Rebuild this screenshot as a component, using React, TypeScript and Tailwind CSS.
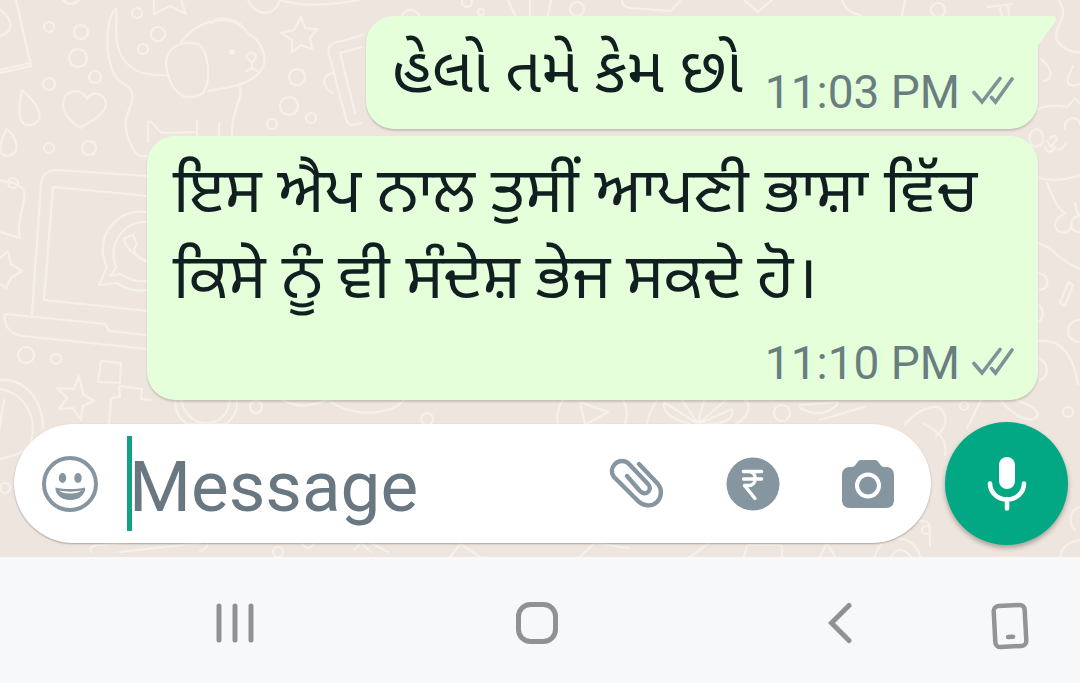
import { FC, ReactNode, useState } from "react";

interface MessageProps {
  text: string;
  time: string;
  lang: string;
  tail?: boolean;
  stacked?: boolean;
}

const Ticks = () => (
  <svg viewBox="0 0 42 32" className="h-8 w-[42px] shrink-0" fill="none" stroke="#7f9396" strokeWidth="3.6" strokeLinecap="round" aria-label="Delivered">
    <path d="M2 16.500 10 26 28 2.500M19.500 21.500 23.500 26 40 3" />
  </svg>
);

const Message: FC<MessageProps> = ({ text, time, lang, tail = false, stacked = false }) => (
  <div
    className={`relative flex rounded-[28px] bg-[#e5ffdb] pl-[26px] pr-6 shadow-[0_2px_2px_rgba(0,0,0,0.16)] ${
      stacked ? "w-[891px] max-w-full flex-col gap-4 pb-[10px] pt-3" : "gap-[22px] rounded-tr-none"
    }`}
  >
    <p lang={lang} className={`text-[63px] text-[#111f20] ${stacked ? "leading-[86px]" : "pb-[14px] pt-[10px] leading-[89px]"}`}>
      {text}
    </p>
    <div className={`flex items-center gap-3 self-end text-[46px] leading-[54px] text-[#6a7e80] ${stacked ? "" : "pb-[10px]"}`}>
      <span className="whitespace-nowrap">{time}</span>
      <Ticks />
    </div>
    {tail && (
      <svg viewBox="0 0 20 32" className="absolute left-full top-0 -ml-px h-8 w-5" fill="#e5ffdb" aria-hidden="true">
        <path d="M0 0h15c4 0 5 3 3 6L1 29v3H0Z" />
      </svg>
    )}
  </div>
);

const dots = [
  [49, 27, 5], [81, 32, 7], [78, 58, 9], [95, 77, 6], [49, 84, 6], [137, 13, 5], [158, 34, 7], [143, 49, 5],
  [297, 77, 8], [289, 106, 9], [311, 118, 5], [272, 124, 5], [49, 148, 5], [89, 148, 7], [13, 183, 5],
  [26, 355, 8], [56, 359, 5], [256, 407, 6], [427, 419, 6], [467, 2, 5], [481, 12, 3], [577, 9, 7],
  [938, 10, 7], [782, 413, 8], [964, 406, 4], [1068, 412, 5], [926, 530, 4], [278, 552, 5], [308, 542, 6], [5, 488, 5],
] as const;

const lines = [
  // books and droplets
  "M16 0 31 66 0 73M0 70 30 63M0 10c14 10 14 22 0 26",
  "M22 90c-8 36 4 37 12 34 13-7 1-23-12-34ZM7 129c-8 14-10 25 0 27 15-2 10-18 0-27Z",
  "M87 98c-9-12-23-7-24 6 1 14 10 18 17 24 9-6 25-13 26-24-1-11-14-14-19-5Z",
  // puppy
  "M116 9c-12 8-12 60 4 72 13 9 13 11 12 21-8 19-9 24-1 43 5 10 6 12 16 11M116 9c2 11-6 43 15 58 11 9 22 7 38 9",
  "M180 44c14-23 51-35 70-9 12 7 17 20 13 32-9 17-29 20-55 24M180 44c-16 7-16 19-11 34 7 20 20 23 34 15 10-16 4-42-4-49-9-1-13-2-19 0Z",
  "M211 23c10-10 30-2 34 7M247 55c5-5 11-1 8 4l-3 4-6-6m6 6v5l-6 3m6-3 5 3M240 87c3 14-8 19-8 48M148 121v21M148 121c9 2 7 10 15 12l34-1M197 121v15M219 123v12",
  "m301 17 4 11 12 1-7 9 2 11-11-4-9 7v-12l-11-7 13-3ZM154 0v14l16-8 16 8-5-14M63 0c5 6 12 4 16 0M248 0c9 18 27 16 32 0 25 8 60 4 80 0",
  "M363 35 334 43c-6 2-6 6-5 11l17 65c2 7 6 7 15 4M362 47l-22 6 15 60M332 73c-12 4-9 15 1 20",
  // laptop
  "M148 176 57 170q-14 0-16 14l-9 130M148 196 53 187 44 300l104 11M5 314c-2 13 7 21 18 22l125 13M5 314l100 10 4 7 39 4",
  "M148 212c-34-5-55 29-41 55l-8 18 18-2c10 7 19 9 31 7M148 222c-24-2-41 22-32 45l-6 9 10-2q14 9 28 7M148 261c-18-5-27-22-23-23l8-3 4 9-3 5c1 7 8 12 14 13",
  "M0 180c12 4 27 2 24 20-4 20-7 27-4 38L0 232M0 258l8-7 3 13 11 7-11 7-5 10-6-4",
  "m79 376-5 13-17-1 10 10-8 11 14-1 8 12 2-14 11-5-11-7ZM101 361l20 2-1 20-22-1ZM119 386l23 3-1 10 10 1M119 386l1 11-9 1-2 26M0 380c25-2 43 20 43 48M0 389c24 4 36 26 32 48-2 13-12 18-32 22M4 400l-5 32",
  "M175 400c0 13 6 20 12 24h40c8-9 12-18 9-24M181 400c6 31 46 31 49 0M283 400c18 11 40 2 45-1 19 18 62 18 76 1",
  // strip above the composer
  "M558 424c-2-9 0-17 5-24M625 424c3-9 2-17-2-24M580 402l5 23 23-13ZM647 424c1-9 6-18 10-24M698 424l-16-24M698 424l-34-22q-3 14 26 22M698 424l6-24M698 424l28-24M698 424l34-15q4 15-28 15M736 424c13-7 16-20 9-24",
  "M800 408q22 12 38-4M800 405l38-3M820 420l44-13M905 424c14-16 34-22 38-12 7 11-1 19-7 24M924 424c20 10 23 20 21 31M1000 400c16 19 34 24 38 15-1-8-15-12-21-15M981 400l-14 28",
  // right-hand side
  "M1059 0c12 20-7 25-2 40 5 9 16 13 23 12M1041 59c11 10 13 19 3 22M1073 66c-9 18-6 22 7 18M1035 111c7-6 23-6 32-4l8-9 5 6M1036 177c14 5 30 3 44-2M1047 183c6 15 10 25 18 30M1075 203q1 8 5 13",
  "M1030 142c-3-15 13-17 13-4 0 10-12 11-13 4ZM1065 129c-2-13 15-15 16-2M1050 138c6-5 9 1 4 5l-3 4-4-6M1045 147c2 7 9 5 9 0 3 4 9 3 12-4",
  "M1066 213c-12 5-14 15-6 19 10 3 10-4 12-8M1080 215c-13 3-11 18 0 17M1038 243c21 7 18 17 42 26M1068 282l5 3-8 21-5-3ZM1038 273c11 0 13 15 2 17M1038 305c7 4 6 14 0 17M1038 341c23-3 35 14 40 43M1040 359c9 4 9 19 0 21M1080 320c-16 0-16 22 0 22",
  // top edge
  "M508 0l7 15M530 0v15M551 0l-3 15M622 0c0 6 3 7 9 8l40 3 9-10M402 15q9-10 17 0M744 0l14 12 14-12M842 0q4 13 18 15M902 15l3-15M988 7l24-3M1000 8l2 8M1008 5l1 11",
  // bottom strip
  "M91 552c-2-6 2-7 12-7l55-6h42c10 1 9 9 0 12M120 552l80-9M354 550l7-7 10 9M371 543l17 9M450 557l10-13 20 13M580 557l14-14 35 5M690 557l19-14M744 557l3-12h35v12M820 557l7-14 8 14M875 557c4-25 40-25 45 0M891 557q9-14 20 0M930 546V528q0-7-8-7h-7M1060 557q3-15 20-17M1075 530c-7-7-6-20 5-23",
];

const Wallpaper = () => (
  <svg viewBox="0 0 1080 557" preserveAspectRatio="xMaxYMax slice" className="absolute inset-0 h-full w-full" fill="none" stroke="#f6f0ea" strokeWidth="2.2" strokeLinejoin="round" strokeLinecap="round" aria-hidden="true">
    {lines.map((d) => (
      <path key={d} d={d} />
    ))}
    {dots.map(([cx, cy, r]) => (
      <circle key={`${cx}-${cy}`} cx={cx} cy={cy} r={r} />
    ))}
    <circle cx="232" cy="52" r="2" fill="#f6f0ea" />
  </svg>
);

const SmileIcon = () => (
  <svg viewBox="0 0 56 56" className="size-14" fill="none" aria-hidden="true">
    <circle cx="28" cy="28" r="26" stroke="#8696a0" strokeWidth="4" />
    <ellipse cx="20.500" cy="22" rx="3.700" ry="5" fill="#8696a0" />
    <ellipse cx="36" cy="22" rx="3.700" ry="5" fill="#8696a0" />
    <path d="M13.500 31.500c9 2 20 2 29.500 0 1 6-5 12.500-14.700 12.500S12.700 37.500 13.500 31.500Z" fill="#8696a0" />
    <path d="M17 34.500c7 1.500 16 1.500 22.500 0-2 2-6 3-11.200 3S19 36.500 17 34.500Z" fill="#fff" />
  </svg>
);

const ClipIcon = () => (
  <svg viewBox="1 1 56 52" className="h-[52px] w-14" fill="none" stroke="#8696a0" strokeWidth="4.400" strokeLinecap="round" strokeLinejoin="round" aria-hidden="true">
    <path d="m31 7 19 20c4 5 4 13-1 18s-13 4-18 0L6 20c-3-4-3-9 1-13s10-4 14 0l19 20c3 3 2 6 0 8s-5 2-8-1L19 19" />
  </svg>
);

const RupeeIcon = () => (
  <svg viewBox="0 0 54 54" className="size-[54px]" aria-hidden="true">
    <circle cx="27" cy="27" r="26.500" fill="#8696a0" />
    <path d="M17.500 14.500h18M17.500 22h18M17.500 14.500h5c9 0 9 14 0 14h-4l10.500 13" fill="none" stroke="#fff" strokeWidth="3.500" strokeLinecap="round" strokeLinejoin="round" />
  </svg>
);

const CameraIcon = () => (
  <svg viewBox="0 0 54 50" className="h-[50px] w-[54px]" aria-hidden="true">
    <path d="M9 8h2c4 0 5-7 9-7h14c4 0 5 7 9 7h2c5 0 8 3 8 8v25c0 5-3 8-8 8H9c-5 0-8-3-8-8V16c0-5 3-8 8-8Z" fill="#8696a0" />
    <circle cx="27" cy="26.500" r="11" fill="none" stroke="#fff" strokeWidth="4" />
  </svg>
);

const MicIcon = () => (
  <svg viewBox="0 0 40 54" className="h-[54px] w-10" fill="none" stroke="#fff" aria-hidden="true">
    <rect x="12" y="0" width="16" height="32" rx="8" fill="#fff" stroke="none" />
    <path d="M3 26.500a17 16 0 0 0 34 0M20 42v9.500" strokeWidth="4.600" strokeLinecap="round" />
  </svg>
);

const IconButton: FC<{ label: string; children: ReactNode }> = ({ label, children }) => (
  <button type="button" aria-label={label} className="flex shrink-0 items-center justify-center">
    {children}
  </button>
);

const App: FC = () => {
  const [draft, setDraft] = useState("");

  return (
    <div className="flex min-h-screen flex-col bg-[#f7f8fa] font-[Roboto,'Noto_Sans_Gujarati','Noto_Sans_Gurmukhi','Noto_Sans',sans-serif]">
      <main className="relative bg-[#eee6de] pb-3 pt-4">
        <Wallpaper />

        <section className="relative flex flex-col items-end gap-[7px] pl-4 pr-[42px]">
          <Message lang="gu" text="હેલો તમે કેમ છો" time="11:03 PM" tail />
          <Message lang="pa" text="ਇਸ ਐਪ ਨਾਲ ਤੁਸੀਂ ਆਪਣੀ ਭਾਸ਼ਾ ਵਿੱਚ ਕਿਸੇ ਨੂੰ ਵੀ ਸੰਦੇਸ਼ ਭੇਜ ਸਕਦੇ ਹੋ।" time="11:10 PM" stacked />
        </section>

        <form className="relative mt-[22px] flex items-center gap-[14px] pl-[14px] pr-3" onSubmit={(e) => e.preventDefault()}>
          <div className="flex h-[119px] min-w-0 flex-1 items-center rounded-full bg-white pl-7 pr-9 shadow-[0_1px_2px_rgba(0,0,0,0.3)]">
            <IconButton label="Emoji">
              <SmileIcon />
            </IconButton>
            {/* caret */}
            <span className="-mr-[3px] ml-[29px] h-[95px] w-[5px] shrink-0 bg-[#12a184]" />
            <input
              type="text"
              aria-label="Message"
              placeholder="Message"
              value={draft}
              onChange={(e) => setDraft(e.target.value)}
              className="h-24 min-w-0 flex-1 pt-2 text-[71px] text-[#111f20] outline-none placeholder:text-[#687780]"
            />
            <div className="flex shrink-0 items-center gap-[61px]">
              <IconButton label="Attach">
                <ClipIcon />
              </IconButton>
              <IconButton label="Payment">
                <RupeeIcon />
              </IconButton>
              <IconButton label="Camera">
                <CameraIcon />
              </IconButton>
            </div>
          </div>
          <button type="button" aria-label="Record voice message" className="flex size-[123px] shrink-0 items-center justify-center rounded-full bg-[#02a884] shadow-[0_3px_5px_rgba(0,0,0,0.3)]">
            <MicIcon />
          </button>
        </form>
      </main>

      <nav className="flex items-start pb-8 pl-[84px] pr-[51px] pt-[45px]" aria-label="System navigation">
        <button type="button" aria-label="Recent apps" className="flex flex-1 justify-center">
          <svg viewBox="0 0 40 42" className="h-[42px] w-10" stroke="#909192" strokeWidth="5" strokeLinecap="round">
            <path d="M4 4v34M20 4v34M36 4v34" />
          </svg>
        </button>
        <button type="button" aria-label="Home" className="flex flex-1 justify-center">
          <svg viewBox="0 0 42 42" className="size-[42px]" fill="none" stroke="#909192" strokeWidth="5">
            <rect x="2.500" y="2.500" width="37" height="37" rx="12" />
          </svg>
        </button>
        <button type="button" aria-label="Back" className="flex flex-1 justify-center">
          <svg viewBox="0 0 24 42" className="h-[42px] w-6" fill="none" stroke="#909192" strokeWidth="5" strokeLinecap="round">
            <path d="M21 3.500 3.500 21 21 38.500" />
          </svg>
        </button>
        <button type="button" aria-label="Keyboard" className="flex shrink-0 justify-center">
          <svg viewBox="0 0 38 48" className="h-12 w-[38px]" fill="none" stroke="#939595" strokeWidth="4.500" strokeLinecap="round">
            <g transform="rotate(-3 19 24)">
              <rect x="3.500" y="3.500" width="31" height="41" rx="5" />
              <path d="M16.500 35h5" />
            </g>
          </svg>
        </button>
      </nav>
    </div>
  );
};

export default App;
